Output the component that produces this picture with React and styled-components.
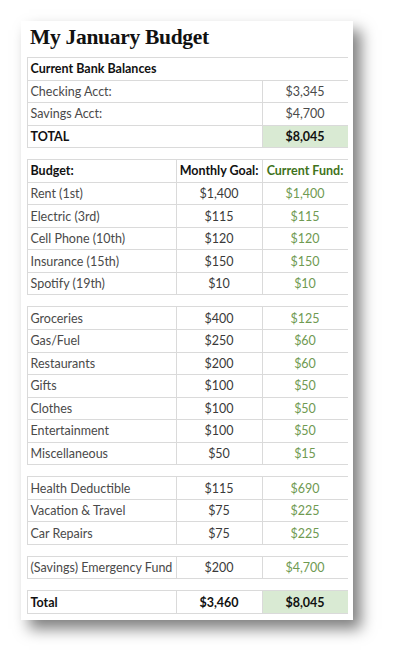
import React from "react";
import styled, {createGlobalStyle} from "styled-components";

const GlobalStyle = createGlobalStyle`
  html, body {margin:0; padding:0; background:#fff;}
  body {font-family: Lato, "Open Sans", sans-serif;}
`;

const Page = styled.div`padding:21px 0 0 21px; width:395px; height:663px; box-sizing:border-box;`;
const Sheet = styled.div`width:332px; box-sizing:border-box; padding:0 5px 6px 5.5px; background:#fff; box-shadow: 8px 9px 14px rgba(0,0,0,0.5);`;
const Title = styled.h1`margin:0; height:36px; box-sizing:border-box; padding:1px 0 0 3.5px; font-family:"Liberation Serif", serif; font-weight:bold; font-size:21.5px; letter-spacing:-0.3px; color:#111; line-height:30px;`;
const Stack = styled.div`display:flex; flex-direction:column; gap:11px;`;
const Grid = styled.div`
  display:grid;
  grid-template-columns: ${p => p.$cols};
  grid-auto-rows: 21.55px;
  gap:1px;
  padding:1px;
  background:#dadada;
`;
const Cell = styled.div`
  background:${p => p.$fill ? "#d9ead3" : "#fff"};
  grid-column: ${p => p.$span ? "1 / -1" : "auto"};
  display:flex; align-items:center;
  justify-content:${p => p.$center ? "center" : "flex-start"};
  padding:0 3px;
  font-size:12.5px;
  font-weight:${p => p.$bold ? 700 : 400};
  color:${p => p.$color || "#4a4a4a"};
  white-space:nowrap;
  overflow:hidden;
`;

const THREE = "148px 85px 85px";
const GREEN = "#6f9a52";

const groups = [
  [["Rent (1st)", "$1,400", "$1,400"], ["Electric (3rd)", "$115", "$115"], ["Cell Phone (10th)", "$120", "$120"], ["Insurance (15th)", "$150", "$150"], ["Spotify (19th)", "$10", "$10"]],
  [["Groceries", "$400", "$125"], ["Gas/Fuel", "$250", "$60"], ["Restaurants", "$200", "$60"], ["Gifts", "$100", "$50"], ["Clothes", "$100", "$50"], ["Entertainment", "$100", "$50"], ["Miscellaneous", "$50", "$15"]],
  [["Health Deductible", "$115", "$690"], ["Vacation & Travel", "$75", "$225"], ["Car Repairs", "$75", "$225"]],
  [["(Savings) Emergency Fund", "$200", "$4,700"]],
];

const BudgetRow = ({row}) => (
  <>
    <Cell>{row[0]}</Cell>
    <Cell $center $color="#3a3a3a">{row[1]}</Cell>
    <Cell $center $color={GREEN}>{row[2]}</Cell>
  </>
);

export default function App() {
  return (
    <Page>
      <GlobalStyle />
      <Sheet>
        <Title>My January Budget</Title>
        <Stack>
          <Grid $cols="234px 85px">
            <Cell $span $bold $color="#111">Current Bank Balances</Cell>
            <Cell>Checking Acct:</Cell>
            <Cell $center>$3,345</Cell>
            <Cell>Savings Acct:</Cell>
            <Cell $center>$4,700</Cell>
            <Cell $bold $color="#111">TOTAL</Cell>
            <Cell $center $bold $fill $color="#111">$8,045</Cell>
          </Grid>
          {groups.map((g, i) => (
            <Grid key={i} $cols={THREE}>
              {i === 0 && (
                <>
                  <Cell $bold $color="#111">Budget:</Cell>
                  <Cell $center $bold $color="#111">Monthly Goal:</Cell>
                  <Cell $center $bold $color="#3f7320">Current Fund:</Cell>
                </>
              )}
              {g.map(r => <BudgetRow key={r[0]} row={r} />)}
            </Grid>
          ))}
          <Grid $cols={THREE}>
            <Cell $bold $color="#111">Total</Cell>
            <Cell $center $bold $color="#111">$3,460</Cell>
            <Cell $center $bold $fill $color="#111">$8,045</Cell>
          </Grid>
        </Stack>
      </Sheet>
    </Page>
  );
}
